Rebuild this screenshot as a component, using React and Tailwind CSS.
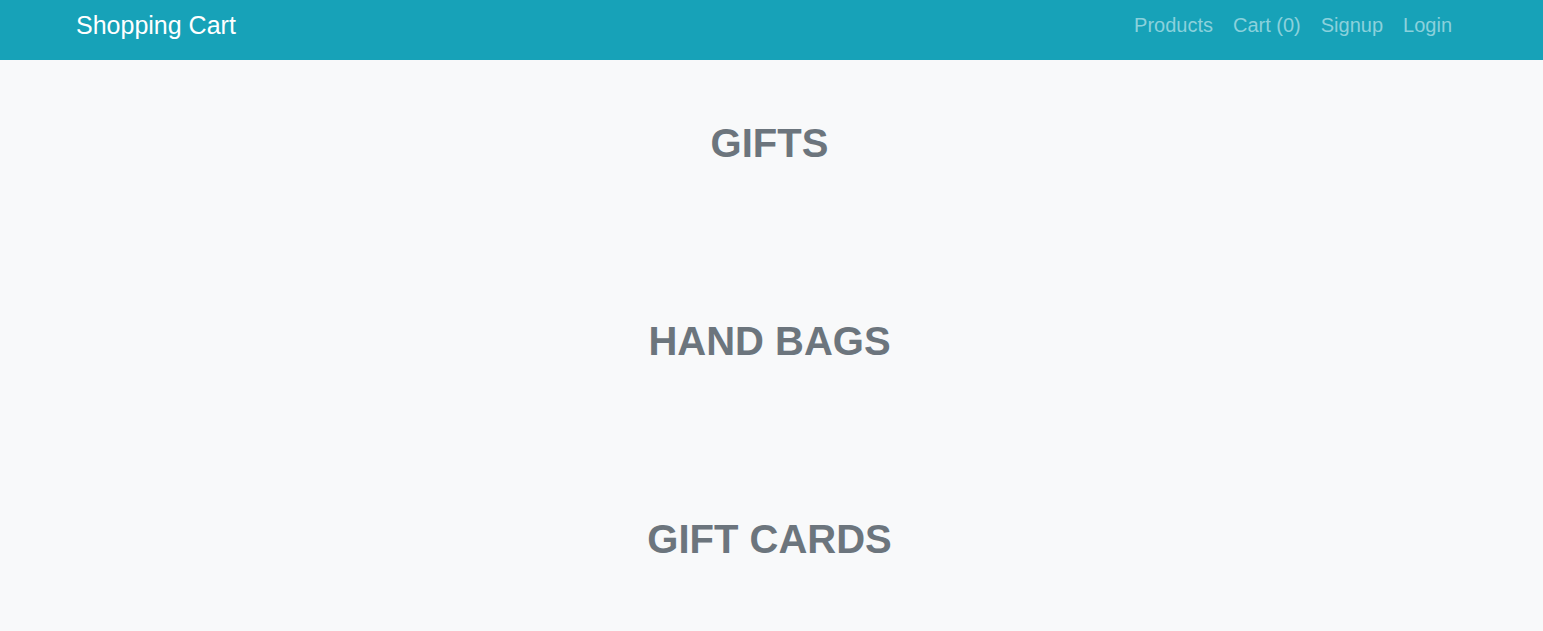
export default function App() {
  const links = ['Products', 'Cart (0)', 'Signup', 'Login'];
  const sections = ['GIFTS', 'HAND BAGS', 'GIFT CARDS'];

  return (
    <div className="min-h-screen bg-[#f8f9fa] font-['Liberation_Sans',Arial,sans-serif]">
      {/* Navbar */}
      <nav className="h-[60px] bg-[#17a2b8] flex items-center justify-between pl-[76px] pr-[91px] pb-[10px]">
        <a href="#" className="text-white text-[25px] leading-none">
          Shopping Cart
        </a>
        <div className="flex items-center gap-[20px]">
          {links.map((l) => (
            <a key={l} href="#" className="text-[20px] leading-none text-[#8bd1dc]">
              {l}
            </a>
          ))}
        </div>
      </nav>

      {/* Categories */}
      <main className="flex flex-col items-center pt-[59px] pr-[4px] gap-[150px]">
        {sections.map((s) => (
          <h1 key={s} className="text-[40px] leading-[48px] font-bold text-[#6c757d]">
            {s}
          </h1>
        ))}
      </main>
    </div>
  );
}
